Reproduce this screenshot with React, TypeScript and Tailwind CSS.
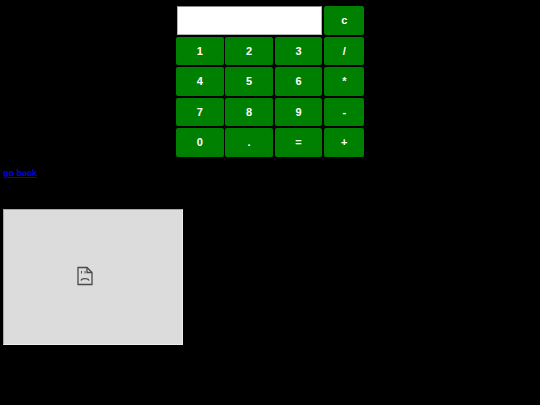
const btn = "bg-[#008000] text-white font-bold text-[11px] rounded-[2px] flex items-center justify-center h-[28.6px]";
const rows = [["1","2","3","/"],["4","5","6","*"],["7","8","9","-"],["0",".","=","+"]];

export default function App() {
  return (
    <div className="w-[540px] h-[405px] bg-black overflow-hidden font-['Liberation_Sans',Arial,sans-serif]">
      <div className="pt-[6px] pl-[176px]">
        <div className="grid grid-cols-[47.5px_47.5px_47.9px_40px] gap-x-[1.8px] gap-y-[2px] w-[188.3px]">
          <div className="col-span-3 h-[28.6px] bg-white border border-[#b5b5b5] border-t-[#8a8a8a] ml-[0.5px] mr-[0.5px]" />
          <div className={btn}>c</div>
          {rows.flat().map((k) => (
            <div key={k} className={btn}>{k}</div>
          ))}
        </div>
      </div>
      <div className="pl-[3px] mt-[9px] h-[14px] text-[9px] leading-[14px] font-bold">
        <a href="#" className="text-[#0000ee] underline">go back</a>
      </div>
      <div className="ml-[3px] mt-[29.5px] w-[180px] h-[136px] bg-[#dcdcdc] border border-[#a8a8a8] border-r-[#ececec] border-b-[#ececec] flex items-center justify-center pr-[17px] pb-[2px]">
        <svg width="16" height="20" viewBox="0 0 16 20" fill="none" stroke="#4a4a4a" strokeWidth="1.3">
          <path d="M1 1.5H10L15 6.5V18.5H1Z" />
          <path d="M10 1.5V6.5H15" />
          <path d="M4.5 5V7.5M8 5V7.5" strokeWidth="1" />
          <path d="M4 14.5C5 12 11 12 12 14.5" />
        </svg>
      </div>
    </div>
  );
}
